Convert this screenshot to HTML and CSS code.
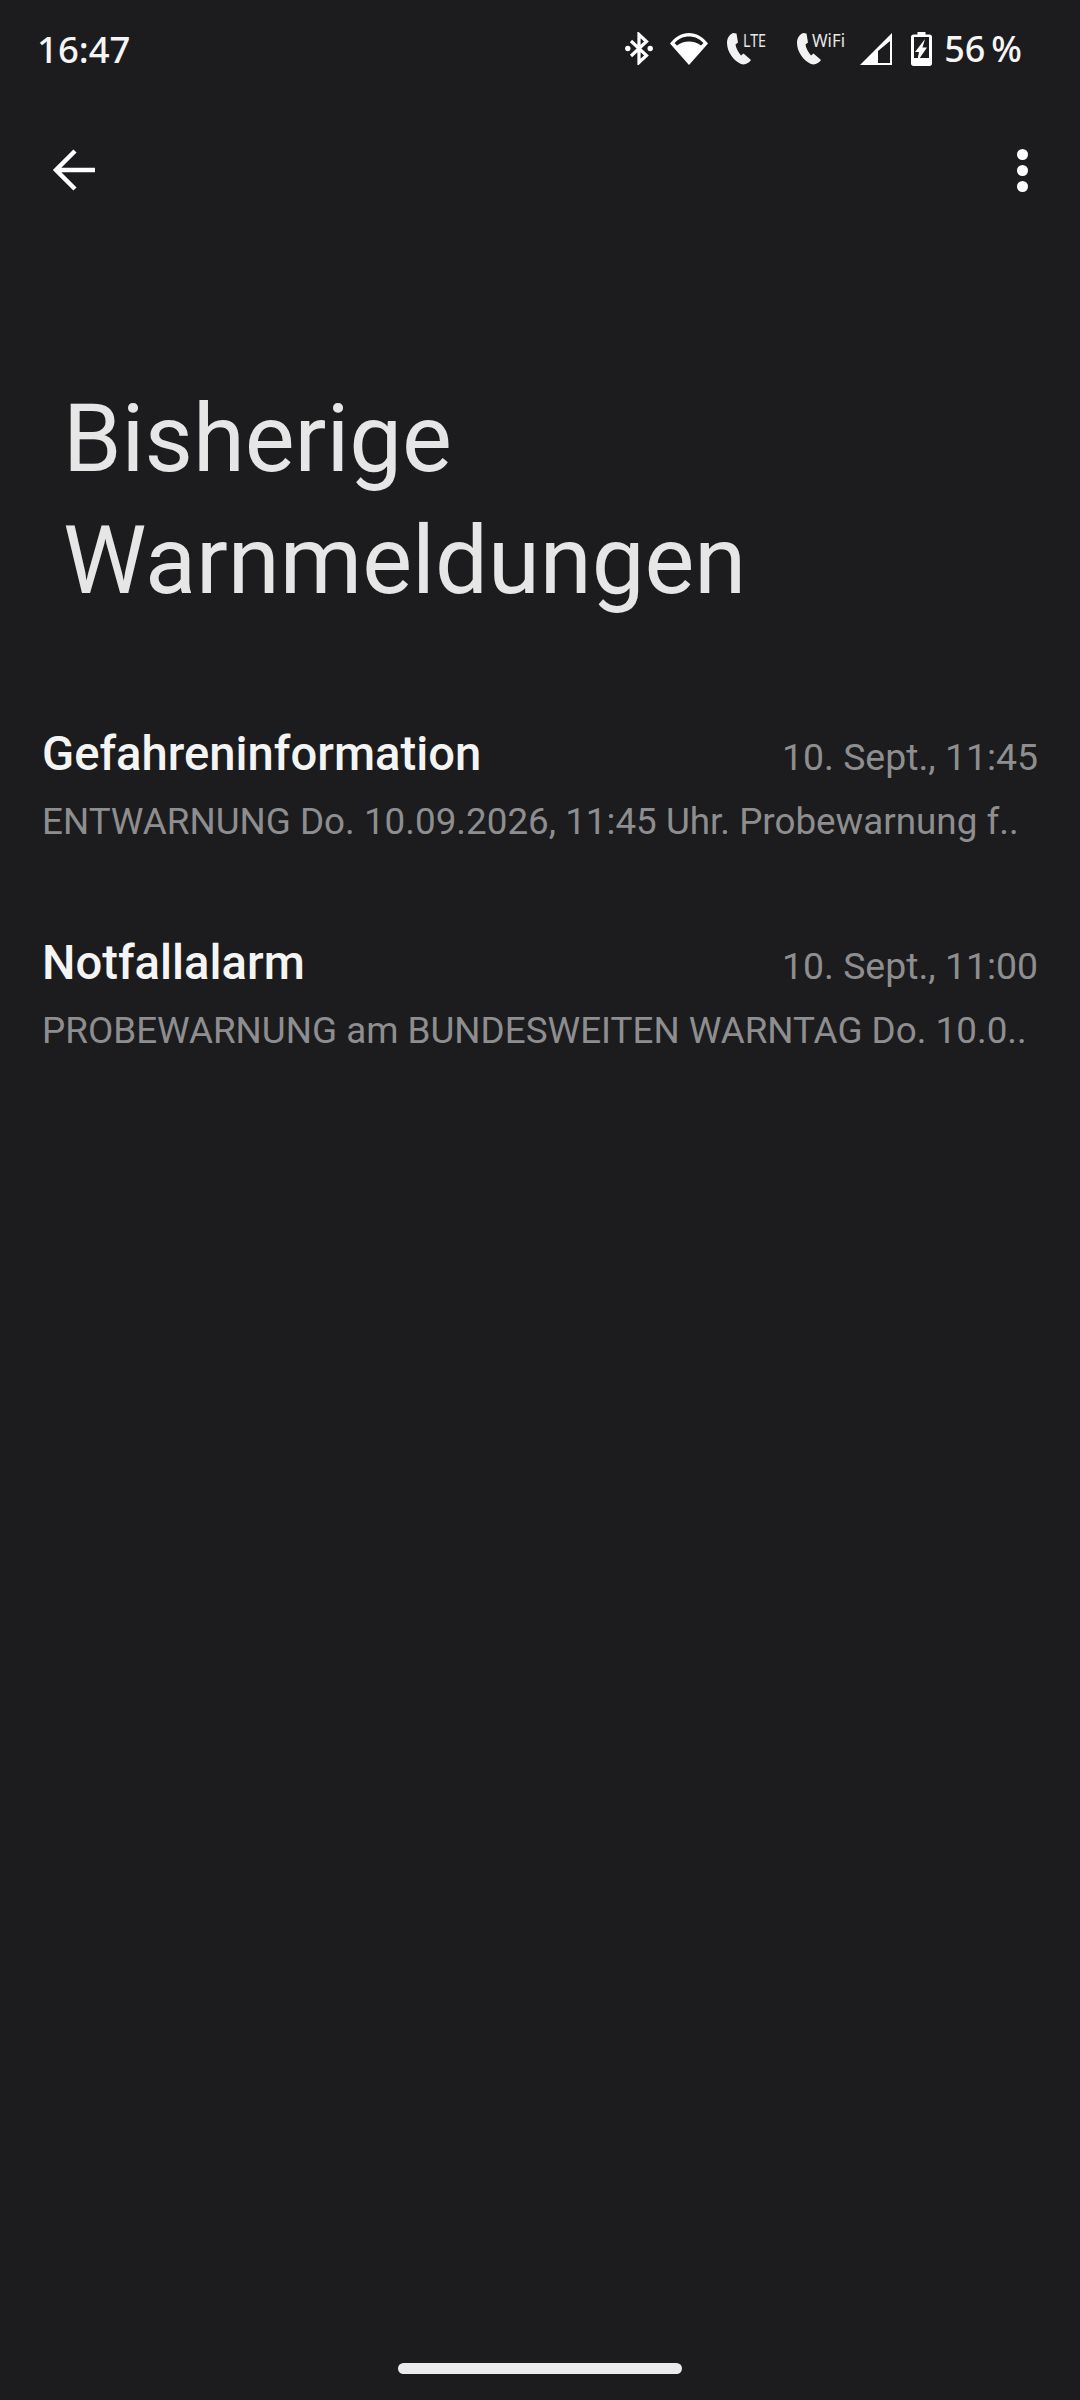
FILE: index.html
```html
<!DOCTYPE html>
<html lang="de">
<head>
  <meta charset="UTF-8"/>
  <meta name="viewport" content="width=device-width, initial-scale=1"/>
  <title>Bisherige Warnmeldungen</title>
  <link rel="stylesheet" href="styles.css">
</head>
<body>

  <div class="status-bar">
    <span class="clock">16:47</span>
    <div class="status-icons">
      <!-- bluetooth with connected dots -->
      <svg width="28" height="33" viewBox="0 0 28 33">
        <path d="M6 9 L21.500 23.500 L14 30.500 V2.500 L21.500 9.500 L6 24" fill="none" stroke="#fff" stroke-width="3.200"/>
        <circle cx="2.800" cy="16.500" r="2.700" fill="#fff"/>
        <circle cx="25.200" cy="16.500" r="2.700" fill="#fff"/>
      </svg>
      <!-- wifi -->
      <svg width="38" height="33" viewBox="0 0 38 33">
        <path d="M19 33 L0 11.500 C5 5 12 1 19 1 C26 1 33 5 38 11.500 Z M19 4.500 C13.500 4.500 9 6.500 4.500 11 L7 13.500 C10.500 11 14.500 9.500 19 9.500 C23.500 9.500 27.500 11 31 13.500 L33.500 11 C29 6.500 24.500 4.500 19 4.500 Z" fill="#fff" fill-rule="evenodd"/>
      </svg>
      <svg width="46" height="43" viewBox="0 -5 46 43">
        <path d="M6 1 C2.500 2.500 0 6 0 11 C0 20 7 29 14 32 C18 33.500 22 31 24 28 L16.500 21.500 L14 23.500 C11 20 9 16 8.500 12.500 L11 10.500 L9.500 1.500 Z" fill="#f2f2f2"/>
        <text class="call-label" x="16" y="15" textLength="23" lengthAdjust="spacingAndGlyphs">LTE</text>
      </svg>
      <svg width="52" height="43" viewBox="0 -5 52 43">
        <path d="M6 1 C2.500 2.500 0 6 0 11 C0 20 7 29 14 32 C18 33.500 22 31 24 28 L16.500 21.500 L14 23.500 C11 20 9 16 8.500 12.500 L11 10.500 L9.500 1.500 Z" fill="#f2f2f2"/>
        <text class="call-label" x="15" y="15" textLength="33" lengthAdjust="spacingAndGlyphs">WiFi</text>
      </svg>
      <!-- signal triangle -->
      <svg width="32" height="32" viewBox="0 0 32 32">
        <path d="M32 0 V32 H0 Z M30 8 L18 18 V30 H30 Z" fill="#fff" fill-rule="evenodd"/>
      </svg>
      <!-- battery charging -->
      <svg width="21" height="34" viewBox="0 0 21 34">
        <path d="M6.500 0 H14.500 V2.500 H18.500 C20 2.500 21 3.500 21 5 V31.500 C21 33 20 34 18.500 34 H2.500 C1 34 0 33 0 31.500 V5 C0 3.500 1 2.500 2.500 2.500 H6.500 Z M3 5 V26 H18 V5 Z" fill="#fff" fill-rule="evenodd"/>
        <path d="M14 7 L4 20 H8 L6 30 L16 15.500 H11.500 Z" fill="#fff"/>
      </svg>
      <span class="battery-text">56 %</span>
    </div>
  </div>

  <div class="toolbar">
    <svg width="44" height="42" viewBox="0 0 44 42">
      <path d="M23 2 L4 21 L23 40 M4 21 H43" fill="none" stroke="#fff" stroke-width="4.500"/>
    </svg>
    <div class="more-dots">
      <span></span>
      <span></span>
      <span></span>
    </div>
  </div>

  <h1 class="page-title">Bisherige Warnmeldungen</h1>

  <main class="alert-list">
    <div class="alert-row">
      <div class="alert-head">
        <span class="alert-name">Gefahreninformation</span>
        <span class="alert-date">10. Sept., 11:45</span>
      </div>
      <p class="alert-text">ENTWARNUNG Do. 10.09.2026, 11:45 Uhr. Probewarnung f..</p>
    </div>
    <div class="alert-row">
      <div class="alert-head">
        <span class="alert-name">Notfallalarm</span>
        <span class="alert-date">10. Sept., 11:00</span>
      </div>
      <p class="alert-text">PROBEWARNUNG am BUNDESWEITEN WARNTAG Do. 10.0..</p>
    </div>
  </main>

  <div class="nav-pill"></div>

</body>
</html>
```

FILE: styles.css
```css
html, body {
  height: 100%;
}

body {
  margin: 0;
  height: 2400px;
  display: flex;
  flex-direction: column;
  overflow: hidden;
  background-color: #1c1c1e;
  color: #fff;
  font-family: Roboto, sans-serif;
}

/* status bar */
.status-bar {
  height: 97px;
  padding-left: 37px;
  padding-right: 58px;
  display: flex;
  align-items: center;
  justify-content: space-between;
}

.clock {
  font-family: "Noto Sans", sans-serif;
  font-size: 36.5px;
  font-weight: 500;
  color: #f5f5f5;
}

.status-icons {
  display: flex;
  align-items: center;
}

.status-icons svg {
  display: block;
}

.status-icons svg:nth-child(1) { margin-right: 17px; }
.status-icons svg:nth-child(2) { margin-right: 19px; }
.status-icons svg:nth-child(3) { margin-right: 24px; }
.status-icons svg:nth-child(4) { margin-right: 11px; }
.status-icons svg:nth-child(5) { margin-right: 19px; }
.status-icons svg:nth-child(6) { margin-right: 12px; }

.call-label {
  font-family: "Noto Sans", sans-serif;
  font-size: 18px;
  fill: #e8e8e8;
}

.battery-text {
  font-family: "Noto Sans", sans-serif;
  font-size: 36px;
  font-weight: 500;
  word-spacing: -3.5px;
  color: #f5f5f5;
}

/* toolbar */
.toolbar {
  height: 146px;
  padding-left: 52px;
  padding-right: 52px;
  display: flex;
  align-items: center;
  justify-content: space-between;
}

.toolbar svg {
  display: block;
}

.more-dots {
  display: flex;
  flex-direction: column;
  gap: 5px;
}

.more-dots span {
  width: 11px;
  height: 11px;
  border-radius: 50%;
  background-color: #fff;
}

.page-title {
  margin: 0;
  padding: 135px 200px 0 63px;
  font-size: 94px;
  font-weight: 400;
  line-height: 122px;
  color: #e6e6e6;
}

.alert-list {
  padding: 100px 42px 0;
}

.alert-row {
  height: 209px;
}

.alert-head {
  display: flex;
  align-items: baseline;
  justify-content: space-between;
}

.alert-name {
  font-size: 47.2px;
  font-weight: 500;
  line-height: 64px;
  color: #f4f4f4;
}

.alert-date {
  font-size: 37.4px;
  color: #8e8e90;
}

.alert-text {
  margin: 0;
  padding-top: 4px;
  font-size: 36.8px;
  line-height: 64px;
  color: #8e8e90;
  white-space: nowrap;
}

.nav-pill {
  width: 284px;
  height: 11px;
  margin: auto auto 26px;
  border-radius: 6px;
  background-color: #ebebeb;
}
```
